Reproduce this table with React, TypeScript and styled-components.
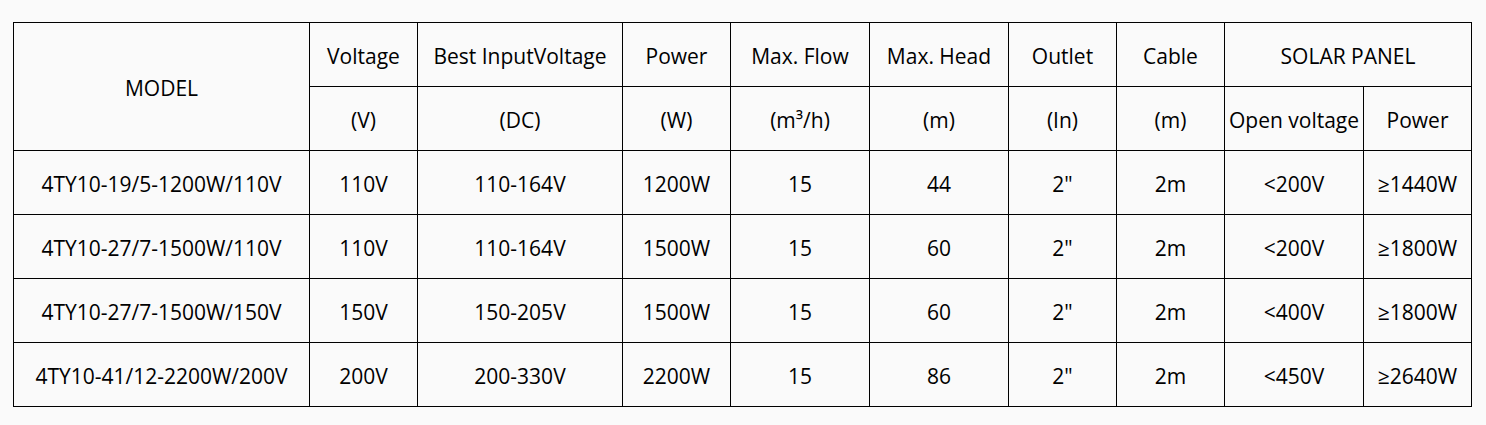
import styled, { createGlobalStyle } from "styled-components";

const GlobalStyle = createGlobalStyle`
  html, body {
    margin: 0;
    padding: 0;
    background: #fafafa;
  }
`;

const Page = styled.div`
  padding: 22px 0 0 13px;
`;

const Table = styled.table`
  border-collapse: collapse;
  table-layout: fixed;
  width: 1459px;
  font-family: "Open Sans", Lato, sans-serif;
  font-size: 21px;
  color: #000;
`;

const Cell = styled.td`
  border: 1px solid #000;
  height: 61px;
  padding: 2px 0 0;
  text-align: center;
  vertical-align: middle;
  white-space: nowrap;
  font-weight: 400;
`;

type SpecRow = {
  model: string;
  voltage: string;
  input: string;
  power: string;
  flow: string;
  head: string;
  outlet: string;
  cable: string;
  openVoltage: string;
  panelPower: string;
};

const rows: SpecRow[] = [
  {
    model: "4TY10-19/5-1200W/110V",
    voltage: "110V",
    input: "110-164V",
    power: "1200W",
    flow: "15",
    head: "44",
    outlet: '2"',
    cable: "2m",
    openVoltage: "<200V",
    panelPower: "≥1440W",
  },
  {
    model: "4TY10-27/7-1500W/110V",
    voltage: "110V",
    input: "110-164V",
    power: "1500W",
    flow: "15",
    head: "60",
    outlet: '2"',
    cable: "2m",
    openVoltage: "<200V",
    panelPower: "≥1800W",
  },
  {
    model: "4TY10-27/7-1500W/150V",
    voltage: "150V",
    input: "150-205V",
    power: "1500W",
    flow: "15",
    head: "60",
    outlet: '2"',
    cable: "2m",
    openVoltage: "<400V",
    panelPower: "≥1800W",
  },
  {
    model: "4TY10-41/12-2200W/200V",
    voltage: "200V",
    input: "200-330V",
    power: "2200W",
    flow: "15",
    head: "86",
    outlet: '2"',
    cable: "2m",
    openVoltage: "<450V",
    panelPower: "≥2640W",
  },
];

// spacing between the grid lines of the original table
const colWidths = [296, 108, 205, 108, 139, 139, 108, 108, 139, 108];

export default function App() {
  return (
    <>
      <GlobalStyle />
      <Page>
        <Table>
          <colgroup>
            {colWidths.map((w, i) => (
              <col key={i} style={{ width: w }} />
            ))}
          </colgroup>
          <thead>
            <tr>
              <Cell as="th" rowSpan={2}>
                MODEL
              </Cell>
              <Cell as="th">Voltage</Cell>
              <Cell as="th">Best InputVoltage</Cell>
              <Cell as="th">Power</Cell>
              <Cell as="th">Max. Flow</Cell>
              <Cell as="th">Max. Head</Cell>
              <Cell as="th">Outlet</Cell>
              <Cell as="th">Cable</Cell>
              <Cell as="th" colSpan={2}>
                SOLAR PANEL
              </Cell>
            </tr>
            <tr>
              <Cell as="th">(V)</Cell>
              <Cell as="th">(DC)</Cell>
              <Cell as="th">(W)</Cell>
              <Cell as="th">(m³/h)</Cell>
              <Cell as="th">(m)</Cell>
              <Cell as="th">(In)</Cell>
              <Cell as="th">(m)</Cell>
              <Cell as="th">Open voltage</Cell>
              <Cell as="th">Power</Cell>
            </tr>
          </thead>
          <tbody>
            {rows.map((r) => (
              <tr key={r.model}>
                <Cell>{r.model}</Cell>
                <Cell>{r.voltage}</Cell>
                <Cell>{r.input}</Cell>
                <Cell>{r.power}</Cell>
                <Cell>{r.flow}</Cell>
                <Cell>{r.head}</Cell>
                <Cell>{r.outlet}</Cell>
                <Cell>{r.cable}</Cell>
                <Cell>{r.openVoltage}</Cell>
                <Cell>{r.panelPower}</Cell>
              </tr>
            ))}
          </tbody>
        </Table>
      </Page>
    </>
  );
}
